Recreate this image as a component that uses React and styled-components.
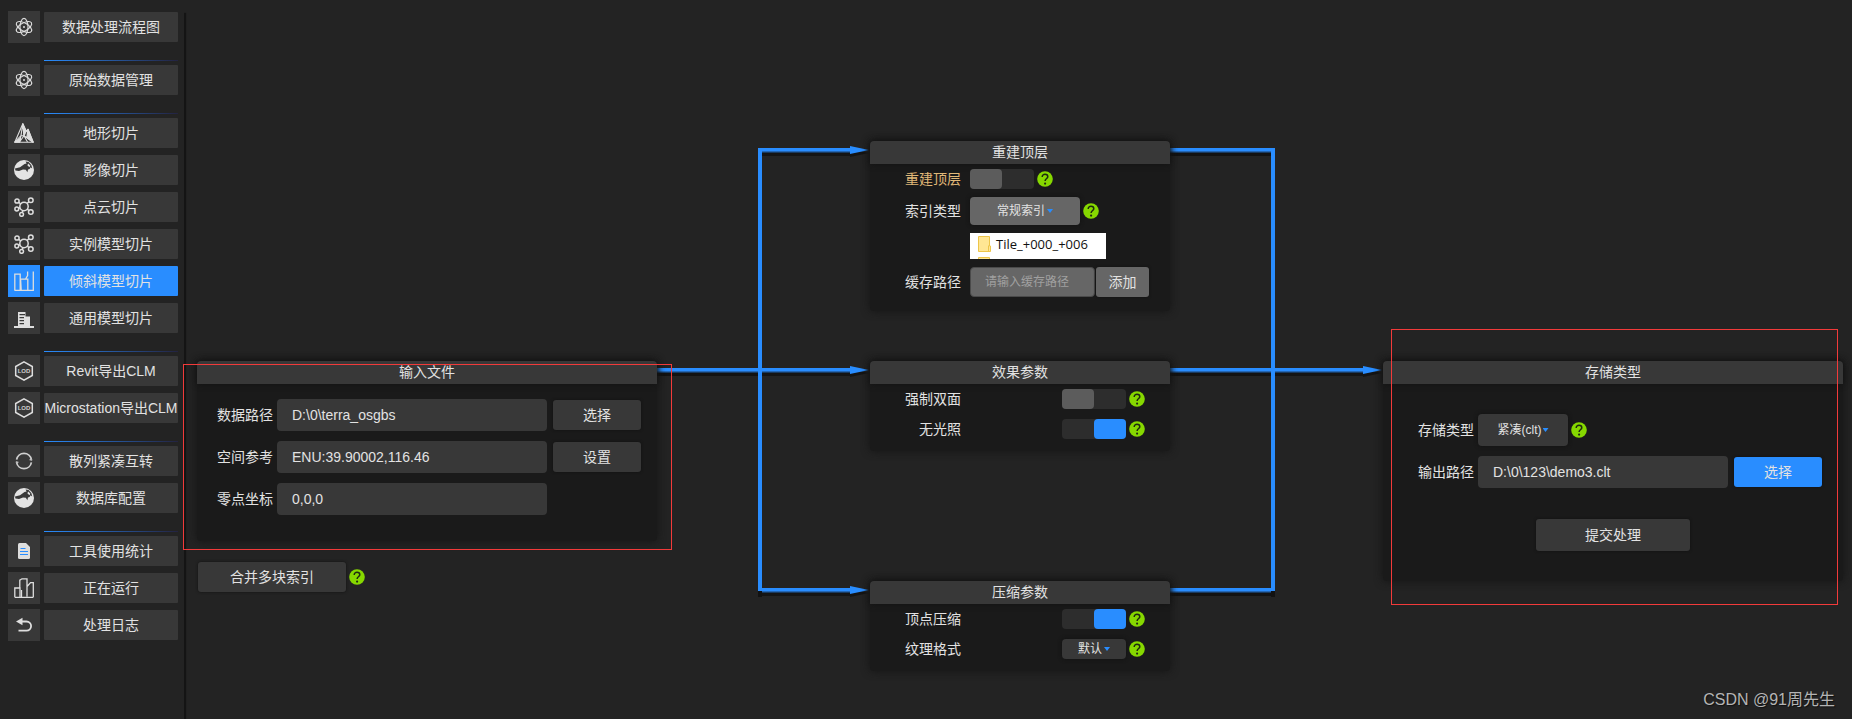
import React, { useState } from 'react';
import styled, { createGlobalStyle, css } from 'styled-components';

const blue = '#298dff';
const wireFill = `linear-gradient(${blue} 0 3px, #2467b5 3px 4px, #193a60 4px)`;

const GlobalStyle = createGlobalStyle`
  * {
    box-sizing: border-box;
  }

  body {
    margin: 0;
    background-color: #232323;
    color: #e2e2e2;
    font-family: 'Liberation Sans', 'Noto Sans CJK SC', sans-serif;
    font-size: 14px;
    line-height: 20px;
  }

  button,
  input,
  select {
    margin: 0;
    color: inherit;
    font: inherit;
  }
`;

const Page = styled.div`
  position: relative;
  display: flex;
  min-height: 100vh;
  overflow: hidden;
`;

const SideBar = styled.nav`
  display: flex;
  flex-direction: column;
  flex: none;
  gap: 21px;
  width: 184px;
  margin-top: 11px;
  padding-left: 8px;
  box-shadow: 2px 2px 1px #141414;
`;

const MenuGroup = styled.div`
  display: flex;
  flex-direction: column;
  gap: 5px;

  & + &::before {
    content: '';
    height: 1px;
    margin: -4px 6px -2px 36px;
    background: linear-gradient(to right, ${blue}, #232340);
  }
`;

const MenuItem = styled.a`
  display: flex;
  align-items: center;
  gap: 4px;
  color: inherit;
  text-decoration: none;
`;

const MenuIcon = styled.span`
  display: flex;
  align-items: center;
  justify-content: center;
  width: 32px;
  height: 32px;
  background-color: ${(props) => (props.$active ? blue : '#383838')};
`;

const MenuLabel = styled.span`
  width: 134px;
  border-radius: 1px;
  background-color: ${(props) => (props.$active ? blue : '#383838')};
  line-height: 30px;
  text-align: center;
  white-space: nowrap;
`;

const Flow = styled.main`
  display: grid;
  flex: 1;
  grid-template-columns: 460px 101fr 4px 108fr 300px 101fr 4px 108fr 460px;
  grid-template-rows: 220px 220px auto;
  align-items: start;
  align-content: start;
  padding: 141px 9px 0 13px;
`;

const FlowCell = styled.div`
  position: relative;
  grid-column: ${(props) => props.$column};
  grid-row: ${(props) => props.$row};
`;

const Wire = styled.div`
  grid-column: ${(props) => props.$column};
  grid-row: ${(props) => props.$row};
  height: 5px;
  margin-top: 7px;
  background: ${wireFill};
  box-shadow: 0 3px 0 #121212;
`;

const ArrowWire = styled.div`
  display: flex;
  grid-column: ${(props) => props.$column};
  grid-row: ${(props) => props.$row};
  height: 8px;
  margin: 5px 1px 0 0;
  filter: drop-shadow(0 3px 0 #141414);

  &::before {
    content: '';
    flex: 1;
    height: 5px;
    margin-top: 2px;
    background: ${wireFill};
  }

  &::after {
    content: '';
    width: 19px;
    height: 8px;
    background-color: ${blue};
    clip-path: polygon(0 0, 100% 50%, 0 100%);
  }
`;

const Trunk = styled.div`
  grid-column: ${(props) => props.$column};
  grid-row: 1 / 4;
  height: 443px;
  margin-top: 7px;
  background-color: ${blue};
  box-shadow: 0 6px 0 #121212;
`;

const CardBox = styled.section`
  height: ${(props) => props.$height}px;
  border-radius: 4px;
  background-color: #1a1a1a;
  box-shadow: 0 0 8px #141414;
`;

const CardTitle = styled.h2`
  height: 23px;
  margin: 0;
  border-radius: 4px 4px 0 0;
  background-color: #383838;
  box-shadow: 0 0 6px #111;
  font-size: 14px;
  font-weight: normal;
  line-height: 23px;
  text-align: center;
`;

const CardBody = styled.div`
  display: flex;
  flex-direction: column;
  gap: ${(props) => props.$gap}px;
  padding-top: ${(props) => props.$top}px;
`;

const Row = styled.div`
  display: flex;
  align-items: center;
`;

const Label = styled.label`
  width: ${(props) => props.$width}px;
  margin-right: ${(props) => props.$space}px;
  color: ${(props) => (props.$changed ? '#e0b878' : 'inherit')};
  text-align: right;
`;

const RightSide = styled.div`
  display: flex;
  align-items: center;
  margin-left: auto;
  padding-right: 25px;
`;

const TextInput = styled.input`
  width: ${(props) => props.$width}px;
  height: 32px;
  padding: 0 15px;
  border: 0;
  border-radius: 4px;
  background-color: #383838;

  ${(props) =>
    props.$light &&
    css`
      height: 30px;
      padding: 0 14px;
      border: 1px solid #4a4a4a;
      background-color: #666;
      font-size: 12px;
    `}

  &::placeholder {
    color: #a0a0a0;
  }
`;

const Button = styled.button`
  width: ${(props) => props.$width || 88}px;
  height: ${(props) => props.$height || 30}px;
  margin-left: ${(props) => props.$space || 0}px;
  padding: 0;
  border: 0;
  border-radius: 3px;
  background-color: ${(props) => props.$color || '#383838'};
  box-shadow: 0 0 3px #111;
`;

const SelectBox = styled.span`
  display: flex;
  align-items: center;
  justify-content: center;
  gap: 1px;
  width: ${(props) => props.$width}px;
  height: ${(props) => props.$height}px;
  border-radius: 4px;
  background-color: ${(props) => (props.$light ? '#666' : '#383838')};
  box-shadow: 0 0 4px #111;

  select {
    padding: 0;
    border: 0;
    appearance: none;
    background: none;
    font-size: 12px;
  }

  &::after {
    content: '';
    width: 6px;
    height: 4px;
    background-color: ${blue};
    clip-path: polygon(0 0, 100% 0, 50% 100%);
  }
`;

const Toggle = styled.input.attrs({ type: 'checkbox' })`
  width: 64px;
  height: 20px;
  border-radius: 4px;
  appearance: none;
  background-color: #2d2d2d;

  &::before {
    content: '';
    display: block;
    width: 32px;
    height: 20px;
    border-radius: 4px;
    background-color: #5c5c5c;
  }

  &:checked::before {
    margin-left: 32px;
    background-color: ${blue};
  }
`;

const HelpButton = styled.button`
  display: flex;
  margin-left: 3px;
  padding: 0;
  border: 0;
  background: none;
`;

const TilePreview = styled.div`
  display: flex;
  gap: 5px;
  width: 136px;
  height: 26px;
  margin-left: 100px;
  padding: 0 8px;
  background-color: #fff;
  color: #111;
  font-family: 'Open Sans', sans-serif;
  font-size: 13px;
  line-height: 23px;
`;

const SubmitRow = styled.div`
  display: flex;
  justify-content: center;
  padding-top: 21px;
`;

const MergeRow = styled.div`
  display: flex;
  align-items: center;
  margin-top: 21px;
  padding-left: 1px;
`;

const Marker = styled.div`
  position: absolute;
  inset: ${(props) => props.$inset};
  border: 1px solid #f23a3a;
  pointer-events: none;
`;

const Watermark = styled.div`
  position: absolute;
  right: 17px;
  bottom: 9px;
  color: #b4b4b4;
  font-size: 16px;
  text-shadow: 1px 1px 1px #111;
`;

const icons = {
  atom: (
    <g fill="none" stroke="#dedede" strokeWidth="1.1">
      <ellipse cx="10" cy="10" rx="4" ry="8.6" />
      <ellipse cx="10" cy="10" rx="4" ry="8.6" transform="rotate(60 10 10)" />
      <ellipse cx="10" cy="10" rx="4" ry="8.6" transform="rotate(120 10 10)" />
      <circle cx="10" cy="10" r="1" fill="#dedede" stroke="none" />
    </g>
  ),
  terrain: (
    <g fill="none" stroke="#dedede" strokeWidth="1.1" strokeLinejoin="round">
      <path d="M8.8.8.8 19.2h18.4L14 6.2l-1.6 2.2z" />
      <path d="M8.8.8 7 12.5.8 19.2M8.8.8l1.2 12 9.2 6.4M7 12.5l3 .3L5.5 19M14 6.2l-1.2 8.4M10 12.8l3.5 6.2M7 12.5l-1.5 6.7" />
      <path d="M8.8.8l3.4 7.4L10 12.8zM.8 19.2 6.6 15l-1 4.2zM14 6.2l5.2 13-5.6-4z" fill="#dedede" />
    </g>
  ),
  globe: (
    <g>
      <circle cx="10" cy="10" r="10" fill="#e3e3e3" />
      <path
        d="M1 8.4 6 7.2 10.5 4 12.6 3.6 11.6 1.4 14.6 2 17.4 5.2 18.2 8.6 16.6 7.2 15.6 9 14 9.6 13.4 12.2 11.8 9.8 9 9.4 5 11 1.4 10.6z"
        fill="#383838"
      />
      <path d="M14.2 3.4l2.2 2.4-1 1.4-2-2z" fill="#e3e3e3" />
    </g>
  ),
  cloud: (
    <g fill="none" stroke="#dedede" strokeWidth="1.5">
      <circle cx="10" cy="9.5" r="4.2" />
      <circle cx="3" cy="4" r="2.1" />
      <circle cx="16.8" cy="3.2" r="2.3" />
      <circle cx="2.8" cy="12" r="1.9" />
      <circle cx="7.6" cy="17.4" r="1.9" />
      <circle cx="16.8" cy="15" r="2.3" />
      <path d="M4.8 5.2 6.6 7M13 6.4l2-1.6M4.6 11.4l1.6-.6M8.2 15.5l.8-2M13.2 12l1.8 1.6" />
    </g>
  ),
  oblique: (
    <g fill="none" stroke="#dedede" strokeWidth="1.3">
      <path d="M.8 19.3V3.2h5.4v16.1M6.4 8.2h7.4v11.1M6.6 8.2l.6 11M11.6 8l2-3.4V.4M.4 19.3h18.9V.4" />
    </g>
  ),
  building: (
    <g fill="#dedede">
      <path
        fillRule="evenodd"
        d="M4 4h7.5v4.6H16V18H4zM5.5 6H11v1.2H5.5zM5.5 9H10v1.2H5.5zM5.5 12H10v1.2H5.5zM5.5 15H10v1.2H5.5z"
      />
      <path d="M0 18h20v2H0z" />
    </g>
  ),
  lod: (
    <g>
      <path d="M10 .9 18.3 5.5v9L10 19.1 1.7 14.5v-9z" fill="none" stroke="#dedede" strokeWidth="1.5" />
      <text x="10" y="12.2" fill="#cfcfcf" fontSize="6" fontWeight="bold" textAnchor="middle">
        LOD
      </text>
    </g>
  ),
  sync: (
    <g fill="none" stroke="#cfcfcf" strokeWidth="1.7">
      <path d="M2.6 8.6a7.5 7.5 0 0 1 14.8 0M17.4 11.4a7.5 7.5 0 0 1-14.8 0" />
      <path d="M18.2 9.2l-2.6-.6M1.8 10.8l2.6.6" strokeWidth="1.2" />
    </g>
  ),
  document: (
    <g>
      <path d="M4 3.5Q4 2 5.5 2H12l4 4v10.5q0 1.5-1.5 1.5h-9Q4 18 4 16.5z" fill="#dedede" />
      <path d="M6.5 7.5h5M6 10.5h8M6 13.5h8" stroke={blue} strokeWidth="1" />
    </g>
  ),
  running: (
    <g fill="none" stroke="#dedede" strokeWidth="1.3">
      <path d="M.8 19.3V10H6v9.3M5.8 10V2.2L8 .8h5v18M12.8 8.8 16.6 4.6H19.3v14.7" />
      <path d="M.8 19.3h18.5M7.5 12v7" />
    </g>
  ),
  back: (
    <g>
      <path d="M6 6.5h6.5a4.6 4.6 0 0 1 0 9.2H4.5" fill="none" stroke="#dedede" strokeWidth="1.8" />
      <path d="M2 6.5 8.5 2.8v7.4z" fill="#dedede" />
    </g>
  ),
};

const menu = [
  [{ icon: 'atom', text: '数据处理流程图' }],
  [{ icon: 'atom', text: '原始数据管理' }],
  [
    { icon: 'terrain', text: '地形切片' },
    { icon: 'globe', text: '影像切片' },
    { icon: 'cloud', text: '点云切片' },
    { icon: 'cloud', text: '实例模型切片' },
    { icon: 'oblique', text: '倾斜模型切片', active: true },
    { icon: 'building', text: '通用模型切片' },
  ],
  [
    { icon: 'lod', text: 'Revit导出CLM' },
    { icon: 'lod', text: 'Microstation导出CLM' },
  ],
  [
    { icon: 'sync', text: '散列紧凑互转' },
    { icon: 'globe', text: '数据库配置' },
  ],
  [
    { icon: 'document', text: '工具使用统计' },
    { icon: 'running', text: '正在运行' },
    { icon: 'back', text: '处理日志' },
  ],
];

const Help = () => (
  <HelpButton type="button" aria-label="帮助">
    <svg width="16" height="16" viewBox="0 0 16 16">
      <circle cx="8" cy="8" r="7.8" fill="#86d800" />
      <path
        d="M5.2 6C5.2 4.2 6.4 3.3 8 3.3s2.8 1 2.8 2.4c0 1.7-2.7 2-2.7 4.4"
        fill="none"
        stroke="#1f2a10"
        strokeWidth="1.5"
      />
      <circle cx="8.1" cy="12.6" r="1.1" fill="#1f2a10" />
    </svg>
  </HelpButton>
);

const Folder = () => (
  <svg width="13" height="26" viewBox="0 0 13 26">
    <path d="M.5 3.5h11V13h1v5.5H.5z" fill="#ffe694" stroke="#edc54a" />
    <path d="M10.5 18.5V12.5" stroke="#edc54a" />
    <path d="M.5 27V24.5h11V27" fill="#ffe694" stroke="#edc54a" />
  </svg>
);

const Card = ({ title, height, top, gap, children }) => (
  <CardBox $height={height}>
    <CardTitle>{title}</CardTitle>
    <CardBody $top={top} $gap={gap}>
      {children}
    </CardBody>
  </CardBox>
);

const Select = ({ id, value, ...box }) => (
  <SelectBox {...box}>
    <select id={id} defaultValue={value}>
      <option value={value}>{value}</option>
    </select>
  </SelectBox>
);

const Menu = () => (
  <SideBar>
    {menu.map((group) => (
      <MenuGroup key={group[0].text}>
        {group.map((item) => (
          <MenuItem href="#" key={item.text}>
            <MenuIcon $active={item.active}>
              <svg width="20" height="20" viewBox="0 0 20 20">
                {icons[item.icon]}
              </svg>
            </MenuIcon>
            <MenuLabel $active={item.active}>{item.text}</MenuLabel>
          </MenuItem>
        ))}
      </MenuGroup>
    ))}
  </SideBar>
);

const App = () => {
  const [form, setForm] = useState({
    dataPath: 'D:\\0\\terra_osgbs',
    reference: 'ENU:39.90002,116.46',
    origin: '0,0,0',
    cachePath: '',
    outputPath: 'D:\\0\\123\\demo3.clt',
  });

  const field = (name) => ({
    id: name,
    value: form[name],
    onChange: (e) => setForm({ ...form, [name]: e.target.value }),
  });

  return (
    <Page>
      <GlobalStyle />
      <Menu />
      <Flow>
        <Wire $column={2} $row={2} />
        {[1, 2, 3].map((row) => (
          <React.Fragment key={row}>
            <ArrowWire $column={4} $row={row} />
            <Wire $column={6} $row={row} />
          </React.Fragment>
        ))}
        <ArrowWire $column={8} $row={2} />
        <Trunk $column={3} />
        <Trunk $column={7} />

        <FlowCell $column={1} $row="2 / 4">
          <FlowCell>
            <Card title="输入文件" height={180} top={15} gap={10}>
              <Row>
                <Label htmlFor="dataPath" $width={76} $space={4}>数据路径</Label>
                <TextInput type="text" $width={270} {...field('dataPath')} />
                <Button type="button" $space={6}>选择</Button>
              </Row>
              <Row>
                <Label htmlFor="reference" $width={76} $space={4}>空间参考</Label>
                <TextInput type="text" $width={270} {...field('reference')} />
                <Button type="button" $space={6}>设置</Button>
              </Row>
              <Row>
                <Label htmlFor="origin" $width={76} $space={4}>零点坐标</Label>
                <TextInput type="text" $width={270} {...field('origin')} />
              </Row>
            </Card>
            <Marker $inset="3px -15px -9px -14px" />
          </FlowCell>
          <MergeRow>
            <Button type="button" $width={148}>合并多块索引</Button>
            <Help />
          </MergeRow>
        </FlowCell>

        <FlowCell $column={5} $row={1}>
          <Card title="重建顶层" height={170} top={5} gap={8}>
            <Row>
              <Label htmlFor="rebuild" $width={91} $space={9} $changed>重建顶层</Label>
              <Toggle id="rebuild" />
              <Help />
            </Row>
            <Row>
              <Label htmlFor="indexType" $width={91} $space={9}>索引类型</Label>
              <Select id="indexType" value="常规索引" $width={110} $height={28} $light />
              <Help />
            </Row>
            <TilePreview>
              <Folder />
              Tile_+000_+006
            </TilePreview>
            <Row>
              <Label htmlFor="cachePath" $width={91} $space={9}>缓存路径</Label>
              <TextInput
                type="text"
                placeholder="请输入缓存路径"
                $width={125}
                $light
                {...field('cachePath')}
              />
              <Button type="button" $width={53} $space={1} $color="#666">添加</Button>
            </Row>
          </Card>
        </FlowCell>

        <FlowCell $column={5} $row={2}>
          <Card title="效果参数" height={90} top={5} gap={10}>
            <Row>
              <Label htmlFor="doubleSided" $width={91} $space={9}>强制双面</Label>
              <RightSide>
                <Toggle id="doubleSided" />
                <Help />
              </RightSide>
            </Row>
            <Row>
              <Label htmlFor="unlit" $width={91} $space={9}>无光照</Label>
              <RightSide>
                <Toggle id="unlit" defaultChecked />
                <Help />
              </RightSide>
            </Row>
          </Card>
        </FlowCell>

        <FlowCell $column={5} $row={3}>
          <Card title="压缩参数" height={90} top={5} gap={10}>
            <Row>
              <Label htmlFor="compress" $width={91} $space={9}>顶点压缩</Label>
              <RightSide>
                <Toggle id="compress" defaultChecked />
                <Help />
              </RightSide>
            </Row>
            <Row>
              <Label htmlFor="texture" $width={91} $space={9}>纹理格式</Label>
              <RightSide>
                <Select id="texture" value="默认" $width={64} $height={20} />
                <Help />
              </RightSide>
            </Row>
          </Card>
        </FlowCell>

        <FlowCell $column={9} $row="2 / 4">
          <Card title="存储类型" height={220} top={30} gap={10}>
            <Row>
              <Label htmlFor="storage" $width={91} $space={4}>存储类型</Label>
              <Select id="storage" value="紧凑(clt)" $width={90} $height={32} />
              <Help />
            </Row>
            <Row>
              <Label htmlFor="outputPath" $width={91} $space={4}>输出路径</Label>
              <TextInput type="text" $width={250} {...field('outputPath')} />
              <Button type="button" $space={6} $color={blue}>选择</Button>
            </Row>
            <SubmitRow>
              <Button type="submit" $width={154} $height={32}>提交处理</Button>
            </SubmitRow>
          </Card>
          <Marker $inset="-32px 5px -24px 8px" />
        </FlowCell>
      </Flow>
      <Watermark>CSDN @91周先生</Watermark>
    </Page>
  );
};

export default App;
